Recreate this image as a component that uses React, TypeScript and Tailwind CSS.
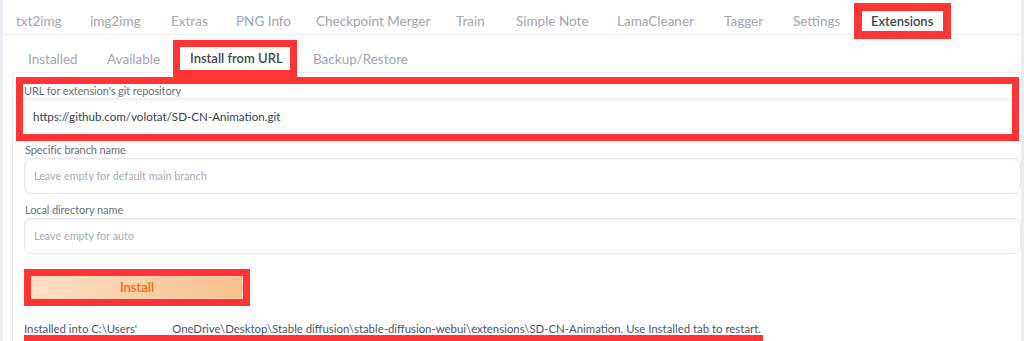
import React from "react";

const RED = "border-[#ff3535]";

const TABS: { t: string; w: string }[] = [
  { t: "txt2img", w: "w-[74px]" },
  { t: "img2img", w: "w-[81px]" },
  { t: "Extras", w: "w-[65px]" },
  { t: "PNG Info", w: "w-[80px]" },
  { t: "Checkpoint Merger", w: "w-[140px]" },
  { t: "Train", w: "w-[60px]" },
  { t: "Simple Note", w: "w-[101px]" },
  { t: "LamaCleaner", w: "w-[107px]" },
  { t: "Tagger", w: "w-[69px]" },
  { t: "Settings", w: "w-[61px]" },
];

export default function App() {
  return (
    <div
      className="w-[1024px] h-[341px] bg-white overflow-hidden flex flex-col border-l-[3px] border-r-[3px] border-[#ebebf1]"
      style={{ fontFamily: "Lato, 'Liberation Sans', sans-serif" }}
    >
      {/* top tabs */}
      <div className="h-[35px] flex items-start border-b border-[#efeff1] shrink-0 pl-[13px]">
        {TABS.map(({ t, w }) => (
          <div key={t} className={`${w} shrink-0 pt-[14px] text-[13.5px] text-[#a2a6ad] leading-[14px] whitespace-nowrap`}>
            {t}
          </div>
        ))}
        <div className="mt-[3px] w-[97px] h-[36px] shrink-0 border-[8px] border-[#ff3535] flex items-center pl-[9px] bg-white relative z-10">
          <span className="text-[13px] font-semibold text-[#3f4654] leading-none">Extensions</span>
        </div>
      </div>

      {/* sub tabs */}
      <div className="h-[37px] flex items-start pl-[25px] shrink-0 relative z-10">
        <div className="w-[79px] shrink-0 pt-[17px] text-[13.5px] text-[#a2a6ad] leading-[14px]">Installed</div>
        <div className="w-[66px] shrink-0 pt-[17px] text-[13.5px] text-[#a2a6ad] leading-[14px]">Available</div>
        <div className="mt-[5px] w-[124px] h-[37px] shrink-0 border-[7px] border-[#ff3535] flex items-center pl-[10px] bg-white">
          <span className="text-[13px] font-semibold text-[#3f4654] leading-none whitespace-nowrap">Install from URL</span>
        </div>
        <div className="ml-[16px] pt-[17px] text-[13.5px] text-[#a2a6ad] leading-[14px]">Backup/Restore</div>
      </div>

      {/* panel */}
      <div className="ml-[9px] flex-1 border-l border-t border-[#ececef] pl-[11px] pt-[4px] flex flex-col">
        {/* URL group with red annotation */}
        <div className={`ml-[-8px] w-[1003px] h-[64px] shrink-0 border-[7px] ${RED} flex flex-col`}>
          <div className="pl-[1px] text-[11px] tracking-[-0.1px] text-[#6b6f78] leading-[14px] whitespace-nowrap">URL for extension's git repository</div>
          <div className="flex-1 flex items-center pl-[10px] shadow-[inset_0_2px_3px_rgba(0,0,0,0.05)] border-t border-[#f0f0f2]">
            <span className="text-[11.6px] text-[#374151] whitespace-nowrap">https://github.com/volotat/SD-CN-Animation.git</span>
          </div>
        </div>

        <div className="mt-[2px] text-[11px] tracking-[-0.1px] text-[#6b6f78] leading-[14px] pl-[1px]">Specific branch name</div>
        <div className="mt-[1px] w-[997px] h-[36px] shrink-0 rounded-[7px] border border-[#e7e7ec] shadow-[inset_0_1px_2px_rgba(0,0,0,0.05)] flex items-center pl-[9px]">
          <span className="text-[10.8px] text-[#a8abb2] whitespace-nowrap">Leave empty for default main branch</span>
        </div>

        <div className="mt-[9px] text-[11px] tracking-[-0.1px] text-[#6b6f78] leading-[14px] pl-[1px]">Local directory name</div>
        <div className="mt-[1px] w-[997px] h-[36px] shrink-0 rounded-[7px] border border-[#e7e7ec] shadow-[inset_0_1px_2px_rgba(0,0,0,0.05)] flex items-center pl-[9px]">
          <span className="text-[10.8px] text-[#a8abb2] whitespace-nowrap">Leave empty for auto</span>
        </div>

        {/* install button */}
        <div className={`mt-[15px] w-[226px] h-[37px] shrink-0 border-[7px] ${RED}`}>
          <div className="w-full h-full bg-gradient-to-r from-[#fde0c4] to-[#f8c08a] flex items-center justify-center border border-[#fbd9b8]">
            <span className="text-[13px] font-semibold text-[#ee6c12] leading-none">Install</span>
          </div>
        </div>

        {/* result */}
        <div className="mt-[15px] text-[11.4px] text-[#4b5563] leading-[16px] whitespace-nowrap flex shrink-0">
          <span>Installed into C:\Users'</span>
          <span className="inline-block w-[35px]" />
          <span>OneDrive\Desktop\Stable diffusion\stable-diffusion-webui\extensions\SD-CN-Animation. Use Installed tab to restart.</span>
        </div>
        <div className="w-[739px] h-[6px] shrink-0 bg-[#ff3535] mt-[-2px]" />
      </div>
    </div>
  );
}
